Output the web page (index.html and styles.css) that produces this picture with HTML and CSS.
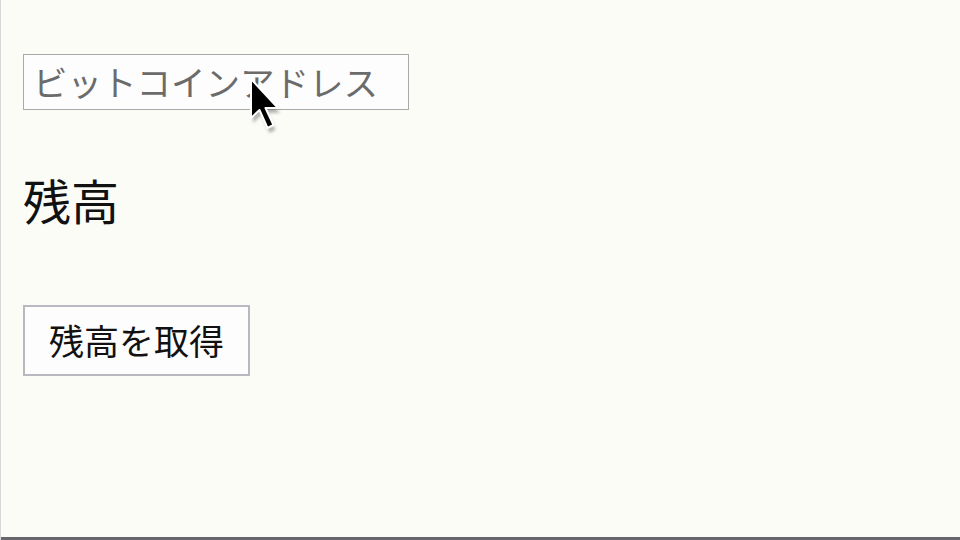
FILE: index.html
```html
<!DOCTYPE html>
<html lang="ja">
<head>
<meta charset="utf-8">
<link rel="stylesheet" href="styles.css">
</head>
<body>
<div class="page">
  <main class="form">
    <input class="address" type="text" placeholder="ビットコインアドレス">
    <h2 class="balance">残高</h2>
    <button class="fetch" type="button">残高を取得</button>
  </main>
  <svg class="cursor" width="40" height="62" viewBox="0 0 40 62">
    <defs>
      <filter id="sh" x="-30%" y="-30%" width="160%" height="160%">
        <feGaussianBlur stdDeviation="1.6"/>
      </filter>
    </defs>
    <path d="M3 2 L3 41 L11.5 33 L19.5 51 L25.5 48 L17.5 31 L30 31 Z" fill="rgba(90,90,90,0.45)" transform="translate(2,5)" filter="url(#sh)"/>
    <path d="M3 2 L3 41 L11.5 33 L19.5 51 L25.5 48 L17.5 31 L30 31 Z" fill="#000" stroke="#fff" stroke-width="2" stroke-linejoin="round"/>
  </svg>
  <div class="bottombar"></div>
</div>
</body>
</html>
```
FILE: styles.css
```css
html, body {
  margin: 0;
  padding: 0;
  width: 960px;
  height: 540px;
  overflow: hidden;
  background: #fcfcf7;
}
.page {
  position: relative;
  width: 960px;
  height: 540px;
  display: flex;
  flex-direction: column;
  border-left: 1px solid #d8d8d8;
  box-sizing: border-box;
}
.form {
  flex: 1;
  display: flex;
  flex-direction: column;
  align-items: flex-start;
  padding: 54px 0 0 22px;
  font-family: "Noto Sans CJK JP", "Noto Sans", sans-serif;
}
.address {
  box-sizing: border-box;
  width: 386px;
  height: 56px;
  margin: 0;
  padding: 0 0 2px 9px;
  border: 1px solid #a9a9a9;
  background: #fdfdfd;
  font-family: "Noto Sans CJK JP", sans-serif;
  font-size: 34.5px;
  color: #333;
  outline: none;
}
.address::placeholder {
  color: #6b6b6b;
}
.balance {
  margin: 59px 0 0 0;
  font-size: 48px;
  font-weight: 400;
  line-height: 60px;
  color: #111;
}
.fetch {
  box-sizing: border-box;
  margin-top: 76px;
  width: 227px;
  height: 71px;
  padding: 0 0 2px 0;
  border: 2px solid #b8b8c0;
  background: #fdfdfd;
  font-family: "Noto Sans CJK JP", sans-serif;
  font-size: 35px;
  color: #111;
}
.cursor {
  position: absolute;
  left: 247px;
  top: 77px;
}
.bottombar {
  height: 3px;
  background: #66666c;
}
```
